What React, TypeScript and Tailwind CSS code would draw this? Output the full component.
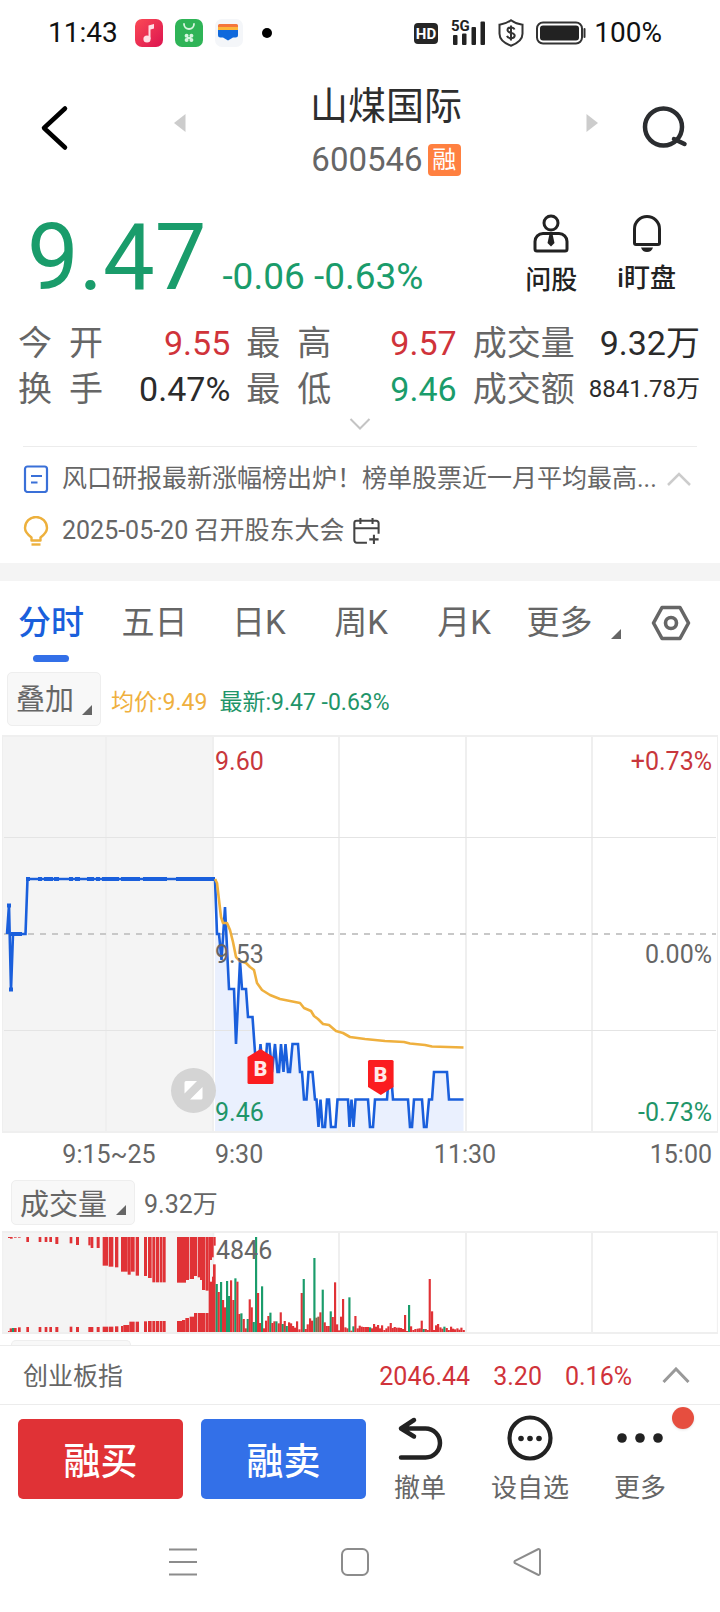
import React from "react";

const RED = "#e03236";
const GREEN = "#1a9c6b";
const BLUE = "#1a5fdc";

const preMarket =
  "7,934 9,905 11,990 13,934 25.5,934 27.5,879 215,879";
const session =
  "215,879 217,934 219,934 221.5,960 225,907 229,989 234,989 236,1044 240,961 242,989 246,989 248,1017 252.5,1017 255,1052 258,1072 260.5,1044 263,1072 265,1072 267,1044 269.5,1044 272,1072 275,1044 277.5,1072 279,1072 281,1044 283.5,1072 285.5,1044 288,1072 290,1072 292.5,1044 298,1044 300,1072 302,1072 304,1099.5 306.5,1099.5 308.5,1072 312.5,1072 315,1099.5 316.5,1099.5 318.5,1127 320.5,1099.5 322.5,1127 325,1127 327,1099.5 329,1099.5 331,1127 335.5,1127 337.5,1099.5 348,1099.5 349.5,1127 351.5,1099.5 353.5,1127 355.5,1099.5 368,1099.5 370,1127 373,1127 375,1099.5 387,1099.5 389,1072 391.5,1080 393,1099.5 408,1099.5 410,1127 412,1127 414,1099.5 422,1099.5 424,1127 426.5,1127 429,1099.5 432,1099.5 434,1072 447,1072 449,1099.5 463.5,1099.5";
const average =
  "215,879 217,883 219,900 221,917 223,923 227,923 230,930 233,942 236,957 240,961 246,963 250,967 254,970 257,983 262,990 270,995 280,999 290,1001 300,1003 304,1008 311,1011 314,1016 318,1019 323,1024 329,1025 336,1031 343,1033 350,1037 365,1039 385,1041 404,1042 410,1043.5 425,1045 432,1046.5 463.5,1047.5";

// Runs of auction quotes on the flat line: start x, end x
const quoteRuns: [number, number][] = [
  [26, 30], [38, 42], [44, 53], [54, 59], [69, 73], [75, 80], [87, 94], [96, 100],
  [102, 119], [121, 140], [143, 167], [176, 215],
];

// Auction bars hanging from the top: x, width, bottom
const matched: [number, number, number][] = [
  [24, 12, 54], [30, 8, 56], [42, 8, 53], [54, 8, 53], [79, 8, 66], [116, 8, 66], [134, 8, 66], [148, 8, 66],
  [166, 9, 72], [209, 8, 70], [228, 9, 75], [265, 7, 76], [272, 8, 84], [290, 9, 84], [308, 16, 137],
  [326, 14, 140], [345, 10, 142], [363, 20, 155], [383, 9, 164], [392, 12, 155], [407, 10, 167],
  [432, 9, 168], [444, 11, 174], [457, 9, 187], [468, 9, 187], [479, 8, 187], [488, 9, 187],
  [531, 27, 188], [558, 9, 180], [569, 13, 177], [582, 9, 168], [593, 7, 172], [600, 6, 180],
  [606, 10, 210], [617, 9, 212], [626, 4, 336], [630, 6, 120], [636, 5, 112], [641, 6, 77],
];
// Auction bars standing on the base line: x, width, top
const unmatched: [number, number, number][] = [
  [24, 5, 333], [29, 7, 325], [42, 8, 324], [54, 8, 322], [79, 8, 321], [116, 8, 321], [134, 8, 321],
  [148, 8, 321], [166, 9, 321], [209, 8, 320], [228, 9, 321], [265, 15, 321], [290, 9, 321], [308, 16, 320],
  [326, 14, 320], [345, 10, 319], [363, 7, 318], [370, 18, 315], [388, 16, 305], [407, 10, 305],
  [432, 9, 304], [444, 11, 303], [457, 9, 303], [468, 9, 303], [479, 8, 303], [488, 9, 303],
  [531, 15, 303], [546, 10, 300], [556, 11, 294], [569, 13, 290], [582, 9, 279], [593, 23, 279],
  [617, 9, 279], [630, 6, 185], [636, 3, 170], [639, 8, 133],
];
// Minute volumes: x, top, colour key
const minutes: [number, number, string][] = [
  [647, 192, "g"], [653, 216, "r"], [660, 186, "g"], [666, 240, "r"], [672, 262, "r"], [678, 183, "g"], [684, 228, "g"],
  [690, 181, "r"], [697, 240, "r"], [703, 175, "g"], [709, 185, "r"], [715, 282, "r"], [721, 280, "g"], [728, 297, "r"],
  [734, 325, "r"], [740, 297, "g"], [746, 238, "r"], [752, 262, "r"], [758, 306, "g"], [765, 51, "g"], [771, 219, "r"],
  [777, 309, "r"], [783, 199, "g"], [789, 325, "r"], [795, 302, "r"], [802, 288, "r"], [808, 278, "g"], [814, 309, "r"],
  [820, 304, "r"], [826, 304, "g"], [833, 310, "r"], [839, 277, "r"], [845, 312, "g"], [851, 303, "r"], [857, 318, "g"],
  [864, 307, "r"], [870, 310, "r"], [876, 318, "r"], [882, 323, "r"], [888, 304, "r"], [895, 328, "r"], [902, 219, "r"],
  [908, 177, "g"], [914, 327, "r"], [920, 313, "r"], [927, 295, "r"], [933, 302, "r"], [940, 114, "g"], [946, 293, "b"],
  [952, 290, "b"], [958, 277, "r"], [965, 209, "g"], [971, 307, "r"], [977, 318, "r"], [983, 318, "r"], [989, 274, "g"],
  [995, 291, "r"], [1002, 187, "r"], [1008, 313, "r"], [1014, 331, "r"], [1020, 290, "r"], [1026, 237, "r"],
  [1033, 322, "r"], [1039, 325, "r"], [1045, 232, "g"], [1051, 332, "r"], [1057, 319, "g"], [1063, 288, "r"],
  [1070, 325, "r"], [1076, 317, "r"], [1082, 320, "r"], [1088, 321, "r"], [1095, 321, "r"], [1101, 321, "r"],
  [1107, 322, "g"], [1113, 325, "r"], [1119, 312, "r"], [1125, 320, "r"], [1131, 315, "r"], [1137, 325, "r"],
  [1143, 316, "r"], [1150, 330, "r"], [1156, 325, "r"], [1162, 319, "r"], [1169, 309, "r"], [1175, 324, "r"],
  [1181, 321, "r"], [1187, 323, "r"], [1194, 323, "r"], [1200, 324, "r"], [1206, 327, "r"], [1212, 285, "r"],
  [1218, 333, "r"], [1224, 255, "g"], [1230, 319, "r"], [1237, 330, "r"], [1243, 327, "r"], [1250, 326, "r"],
  [1256, 325, "r"], [1262, 302, "r"], [1268, 327, "g"], [1274, 327, "r"], [1280, 330, "r"], [1286, 177, "r"],
  [1293, 274, "r"], [1299, 330, "r"], [1305, 316, "r"], [1311, 312, "r"], [1318, 322, "r"], [1324, 326, "r"],
  [1330, 320, "g"], [1337, 324, "r"], [1343, 330, "r"], [1350, 320, "r"], [1356, 326, "r"], [1362, 328, "r"],
  [1369, 325, "r"], [1375, 329, "r"], [1381, 323, "r"], [1388, 330, "r"],
];
const barColor: Record<string, string> = { r: RED, g: GREEN, b: "#8a6548" };

function StatusBar() {
  return (
    <div className="flex h-[66px] items-center pr-[58px] pl-[48px] text-[#111]">
      <span className="text-[28px] leading-8">11:43</span>
      <svg className="ml-[17px] h-7 w-7" viewBox="0 0 28 28">
        <defs>
          <linearGradient id="music" x1="0" y1="0" x2="1" y2="1">
            <stop offset="0" stopColor="#fb4a55" />
            <stop offset="1" stopColor="#dc1450" />
          </linearGradient>
        </defs>
        <rect width="28" height="28" rx="7" fill="url(#music)" />
        <path d="M13.500 6.500 19 5v4.500l-3.500 1V20h-2z" fill="#ffdfe5" />
        <circle cx="12" cy="20" r="3.600" fill="#ffdfe5" />
      </svg>
      <svg className="ml-[12px] h-7 w-7" viewBox="0 0 28 28">
        <rect width="28" height="28" rx="7" fill="#2fb457" />
        <path d="M9 5a5 5 0 0 0 10 0" stroke="#d6f5df" strokeWidth="1.800" fill="none" strokeLinecap="round" />
        <g fill="#d6f5df">
          <circle cx="11.600" cy="16.800" r="2" /><circle cx="16.400" cy="16.800" r="2" />
          <circle cx="11.600" cy="21" r="2" /><circle cx="16.400" cy="21" r="2" />
          <path d="M12 18h4v2h-4z" />
        </g>
      </svg>
      <svg className="ml-[12px] h-7 w-7" viewBox="0 0 28 28">
        <rect width="28" height="28" rx="7" fill="#f4f6f9" />
        <path d="M3 6.500A1.500 1.500 0 0 1 4.500 5h17A1.500 1.500 0 0 1 23 6.500v2H3z" fill="#f4763c" />
        <path d="M3 8h20v3H3z" fill="#fcb63a" />
        <path d="M3 11h20v5a2.500 2.500 0 0 1-2.500 2.500H18L13 21.500l-5-3H5.500A2.500 2.500 0 0 1 3 16z" fill="#1069dc" />
      </svg>
      <span className="ml-[19px] h-[10px] w-[10px] rounded-full bg-black" />
      <svg className="ml-auto h-[22px] w-[25px]" viewBox="0 0 25 22">
        <rect width="24" height="21" y="1" rx="4" fill="#262626" />
        <text x="12" y="17" textAnchor="middle" fill="#fff" className="text-[15px] font-bold">HD</text>
      </svg>
      <svg className="ml-[11px] h-9 w-[36px]" viewBox="0 -4 36 36">
        <text x="1" y="12" fill="#222" className="text-[15px] font-bold">5G</text>
        <g fill="#222">
          <rect x="3" y="16" width="4.500" height="10" rx="1" />
          <rect x="12" y="14.500" width="4.500" height="11.500" rx="1" />
          <rect x="21.500" y="8" width="4.500" height="18" rx="1" />
          <rect x="30.500" y="2.500" width="4.500" height="23.500" rx="1" />
        </g>
      </svg>
      <svg className="ml-[12px] h-[28px] w-[26px]" viewBox="0 0 26 28" fill="none" stroke="#333">
        <path d="M13 1.200c3.500 2.600 7 4 11.500 4.500v9c0 6-5 9.500-11.500 12-6.500-2.500-11.500-6-11.500-12v-9C6 5.200 9.500 3.800 13 1.200z" strokeWidth="2" />
        <path d="M16.500 10.500c-.6-1.500-2-2-3.500-2-2 0-3.500 1-3.500 2.600 0 3.800 7.200 1.800 7.200 5.500 0 1.700-1.500 2.700-3.700 2.700-2 0-3.500-.8-4-2.400M13 6.500v15" strokeWidth="2" />
      </svg>
      <svg className="ml-[12px] h-6 w-[50px]" viewBox="0 0 50 24">
        <rect x="1" y="1.500" width="45" height="21" rx="6" fill="none" stroke="#333" strokeWidth="2" />
        <rect x="4" y="4.500" width="39" height="15" rx="3" fill="#222" />
        <path d="M48.500 8v8" stroke="#333" strokeWidth="2" strokeLinecap="round" />
      </svg>
      <span className="ml-[8px] text-[28px] leading-8">100%</span>
    </div>
  );
}

function Header() {
  return (
    <header className="flex h-[124px] items-center justify-between px-[32px]">
      <button aria-label="返回" className="flex w-[46px] justify-center">
        <svg className="h-[46px] w-[30px]" viewBox="0 0 30 46">
          <path d="M25 3.500 4 23l21 19.500" fill="none" stroke="#000" strokeWidth="4.500" strokeLinecap="round" strokeLinejoin="round" />
        </svg>
      </button>
      <button aria-label="上一只" className="mb-[10px] ml-[96px]">
        <svg className="h-[18px] w-[12px]" viewBox="0 0 12 18"><path d="M11.500 0v18L0 9z" fill="#ccc" /></svg>
      </button>
      <div className="flex flex-1 flex-col items-center pt-[10px]">
        <h1 className="text-[38px] leading-[54px] text-[#2e2e2e]">山煤国际</h1>
        <p className="flex items-center gap-[5px] text-[33px] leading-[54px] text-[#666]">
          600546
          <span className="flex h-8 w-[33px] items-center justify-center rounded-[4px] bg-[#ff8040] text-[24px] text-white">融</span>
        </p>
      </div>
      <button aria-label="下一只" className="mr-[40px] mb-[10px]">
        <svg className="h-[18px] w-[12px]" viewBox="0 0 12 18"><path d="M.5 0v18L12 9z" fill="#ccc" /></svg>
      </button>
      <button aria-label="搜索">
        <svg className="h-[46px] w-[50px]" viewBox="0 0 50 46" fill="none" stroke="#2b2d30" strokeWidth="4.500">
          <circle cx="25.500" cy="22" r="18.500" />
          <path d="M36 34l10.500 5" strokeLinecap="round" />
        </svg>
      </button>
    </header>
  );
}

function PriceLine() {
  return (
    <section className="flex h-[130px] justify-between pr-[44px] pl-[27px]">
      <div className="flex items-baseline text-[#1a9c6b]">
        <span className="text-[92px] leading-[136px]">9.47</span>
        <span className="ml-[16px] text-[37px]">-0.06 -0.63%</span>
      </div>
      <div className="flex items-start gap-[40px] pt-[24px] text-[26px] leading-[38px] font-medium text-[#222]">
        <button className="flex flex-col items-center gap-[8px]">
          <svg className="h-[39px] w-[36px]" viewBox="0 0 36 39" fill="none" stroke="#222" strokeWidth="3">
            <circle cx="18" cy="9" r="7" />
            <path d="M10 19.500h16a8 8 0 0 1 8 8V35a2 2 0 0 1-2 2H4a2 2 0 0 1-2-2v-7.500a8 8 0 0 1 8-8z" />
            <path d="M16.500 20h3l2 9-3.500 3.500-3.500-3.500z" fill="#222" stroke="none" />
          </svg>
          问股
        </button>
        <button className="flex flex-col items-center gap-[6px]">
          <svg className="h-[39px] w-[30px]" viewBox="0 0 30 39">
            <path d="M2.500 29V15a12.500 12.500 0 0 1 25 0v14a1.500 1.500 0 0 1-1.500 1.500H4A1.500 1.500 0 0 1 2.500 29z" fill="none" stroke="#222" strokeWidth="3" />
            <path d="M9 33.500h12c-1 3-3 4.500-6 4.500s-5-1.500-6-4.500z" fill="#222" />
          </svg>
          i盯盘
        </button>
      </div>
    </section>
  );
}

function Quote({ label, value, tone, small }: { label: string; value: string; tone: string; small?: boolean }) {
  return (
    <div className="flex items-center justify-between">
      <dt className={label.length === 2 ? "flex gap-[17px] text-[#666]" : "text-[#666]"}>
        {label.length === 2 ? label.split("").map((c) => <span key={c}>{c}</span>) : label}
      </dt>
      <dd className={small ? "text-[24px] whitespace-nowrap " + tone : "text-[34px] whitespace-nowrap " + tone}>{value}</dd>
    </div>
  );
}

function Quotes() {
  return (
    <section>
      <dl className="grid grid-cols-[212fr_210fr_227fr] gap-x-[16px] pr-[20px] pl-[18px] text-[34px] leading-[46px]">
        <Quote label="今开" value="9.55" tone="text-[#d0333a]" />
        <Quote label="最高" value="9.57" tone="text-[#d0333a]" />
        <Quote label="成交量" value="9.32万" tone="text-[#2b2b2b]" />
        <Quote label="换手" value="0.47%" tone="text-[#2b2b2b]" />
        <Quote label="最低" value="9.46" tone="text-[#1a9c6b]" />
        <Quote label="成交额" value="8841.78万" tone="text-[#2b2b2b]" small />
      </dl>
      <button aria-label="展开行情" className="flex h-[34px] w-full justify-center pt-[6px]">
        <svg className="h-3 w-[22px]" viewBox="0 0 22 12"><path d="M1.500 1 11 10.500 20.500 1" fill="none" stroke="#c4c4c4" strokeWidth="2" /></svg>
      </button>
    </section>
  );
}

function News() {
  return (
    <section className="mx-[23px] border-t border-[#ececec] pt-[6px] pb-[6px] text-[25px] text-[#666]">
      <div className="flex h-[52px] items-center">
        <svg className="h-7 w-[26px] shrink-0" viewBox="0 0 26 28" fill="none" stroke="#3a70d8" strokeWidth="2.200">
          <rect x="2" y="1.500" width="22" height="25.500" rx="2.500" />
          <path d="M8 11h11M8 17.500h6.500" />
        </svg>
        <a href="#news" className="ml-[13px] flex-1 leading-[38px] whitespace-nowrap">风口研报最新涨幅榜出炉！榜单股票近一月平均最高...</a>
        <button aria-label="收起资讯" className="mr-[6px] shrink-0">
          <svg className="h-[14px] w-[24px]" viewBox="0 0 24 14"><path d="M1 13 12 2l11 11" fill="none" stroke="#ccc" strokeWidth="2.500" /></svg>
        </button>
      </div>
      <div className="flex h-[52px] items-center">
        <svg className="h-[30px] w-[26px]" viewBox="0 0 26 30" fill="none" stroke="#edb03c" strokeWidth="2.400">
          <path d="M8.500 24.500v-3C4.500 18.500 2 16 2 12a11 11 0 0 1 22 0c0 4-2.500 6.500-6.500 9.500v3z" strokeLinejoin="round" />
          <path d="M8.500 28.500h9" />
        </svg>
        <span className="ml-[13px]">2025-05-20 召开股东大会</span>
        <button aria-label="加入日历" className="ml-[8px]">
          <svg className="h-[28px] w-[28px]" viewBox="0 0 30 30" fill="none" stroke="#444" strokeWidth="2.200">
            <path d="M16 27.500H5a2.500 2.500 0 0 1-2.500-2.500V6.500A2.500 2.500 0 0 1 5 4h21a2.500 2.500 0 0 1 2.500 2.500V18M2.500 12h26M9 1v6.500M22 1v6.500M23.500 19v10M18.500 24h10" />
          </svg>
        </button>
      </div>
    </section>
  );
}

function Corner() {
  return (
    <svg className="h-[10px] w-[10px] shrink-0" viewBox="0 0 10 10"><path d="M10 0v10H0z" fill="#666" /></svg>
  );
}

function Tabs() {
  return (
    <nav className="flex h-[84px] items-center justify-between pr-[29px] pl-[18px] text-[33px] text-[#666]">
      <button className="relative flex h-full items-center font-medium text-[#1a5fdc]">
        分时
        <span className="absolute bottom-[3px] left-1/2 h-[7px] w-9 -translate-x-1/2 rounded-full bg-[#3370e8]" />
      </button>
      <button className="ml-[7px]">五日</button>
      <button className="ml-[14px]">日K</button>
      <button className="ml-[18px]">周K</button>
      <button className="ml-[19px]">月K</button>
      <button className="ml-[5px] flex items-center gap-[18px]">
        更多
        <span className="pt-[22px]"><Corner /></span>
      </button>
      <button aria-label="图表设置">
        <svg className="h-9 w-[40px]" viewBox="0 0 40 36" fill="none" stroke="#666" strokeWidth="3.600">
          <path d="M11 2.500h18L37.500 18 29 33.500H11L2.500 18z" strokeLinejoin="round" />
          <circle cx="20" cy="18" r="5.500" />
        </svg>
      </button>
    </nav>
  );
}

function PriceChart() {
  return (
    <svg className="mt-[6px] block w-full" viewBox="0 732 720 440" role="img" aria-label="分时走势">
      <rect x="3" y="736" width="211" height="396" fill="#f4f4f4" />
      <polygon points={session + " 463.5,1132 215,1132"} fill="#eaf0fe" />
      <g stroke="#efefef" strokeWidth="2" fill="none">
        <path d="M2 736h716M2 1132h716" />
        <path d="M2.500 736v396M717.500 736v396" strokeWidth="1" />
        <path d="M106 736v396M213 736v396M339 736v396M466 736v396M592 736v396" />
        <path d="M4 837.500h712M4 1030.500h712" stroke="#e4e4e4" strokeWidth="1" />
      </g>
      <path d="M4 934h712" stroke="#c8c8c8" strokeWidth="2" strokeDasharray="6 6" />
      <g fill="none" stroke={BLUE} strokeWidth="2.600" strokeLinejoin="miter" strokeMiterlimit="2">
        <polyline points={preMarket} />
        <polyline points={session} />
      </g>
      <g fill={BLUE}>
        <rect x="7" y="903.500" width="4" height="4" />
        <rect x="9" y="987.500" width="4" height="4" />
        <rect x="11" y="932" width="11" height="4" />
        {quoteRuns.map(([a, b]) => (
          <rect key={a} x={a} y="877" width={b - a} height="4" />
        ))}
      </g>
      <polyline points={average} fill="none" stroke="#efb03e" strokeWidth="2.600" strokeLinejoin="round" />
      <circle cx="193.500" cy="1090.500" r="22.500" fill="#d4d4d4" />
      <path d="M184.500 1082.500a1.500 1.500 0 0 1 1.500-1.500h11l-12.500 12.500zM202.500 1098a1.500 1.500 0 0 1-1.500 1.500h-11l12.500-12.500z" fill="#fff" />
      <g fill="#fb1c1f">
        <path d="M247.500 1057l13-8 13 8v25.500a1.500 1.500 0 0 1-1.500 1.500h-23a1.500 1.500 0 0 1-1.500-1.500z" />
        <path d="M368 1087l12.800 8 12.800-8v-25.500a1.500 1.500 0 0 0-1.500-1.500h-22.600a1.500 1.500 0 0 0-1.500 1.500z" />
      </g>
      <g fill="#ffe9e9" textAnchor="middle" className="text-[21px] font-black">
        <text x="260.500" y="1076">B</text>
        <text x="380.500" y="1082">B</text>
      </g>
      <g className="text-[25px]">
        <text x="215" y="770" fill="#c8373c">9.60</text>
        <text x="215" y="963" fill="#666">9.53</text>
        <text x="215" y="1121" fill="#1f9569">9.46</text>
        <g textAnchor="end">
          <text x="712" y="770" fill="#c8373c">+0.73%</text>
          <text x="712" y="963" fill="#666">0.00%</text>
          <text x="712" y="1121" fill="#1f9569">-0.73%</text>
        </g>
        <g fill="#666">
          <text x="109" y="1163" textAnchor="middle">9:15~25</text>
          <text x="215" y="1163">9:30</text>
          <text x="465" y="1163" textAnchor="middle">11:30</text>
          <text x="712" y="1163" textAnchor="end">15:00</text>
        </g>
      </g>
    </svg>
  );
}

function VolumeChart() {
  return (
    <svg className="mt-[6px] block w-full" viewBox="0 33 2160 312" role="img" aria-label="成交量走势">
      <rect x="8" y="36" width="634" height="302" fill="#f4f4f4" />
      <g stroke="#efefef" strokeWidth="6">
        <path d="M6 36h2148M6 339h2148" />
        <path d="M318 36v303M640 36v303M1017 36v303M1398 36v303M1776 36v303" />
        <path d="M8 36v303M2152 36v303" strokeWidth="3" />
      </g>
      <g fill={RED}>
        {matched.map(([x, w, b]) => <rect key={x} x={x} y="51" width={w} height={b - 51} />)}
        {unmatched.map(([x, w, t]) => <rect key={x} x={x} y={t} width={w} height={336 - t} />)}
      </g>
      <rect x="36" y="324" width="6" height="12" fill={GREEN} />
      {minutes.map(([x, t, c]) => <rect key={x} x={x} y={t} width="6.500" height={336 - t} fill={barColor[c]} />)}
      <text x="648" y="116" fill="#666" className="text-[75px]">4846</text>
    </svg>
  );
}

export default function App() {
  return (
    <div lang="zh-CN" className="min-h-screen w-full overflow-hidden bg-white font-['Roboto','Noto_Sans_CJK_SC',sans-serif]">
      <StatusBar />
      <Header />
      <PriceLine />
      <Quotes />
      <News />
      <div className="h-[18px] bg-[#f4f4f4]" />
      <Tabs />
      <div className="flex items-center pt-[7px] pl-[7px]">
        <button className="flex h-[54px] w-[94px] items-center justify-between rounded-[5px] border border-[#eee] bg-[#f8f8f8] pt-1 pr-[8px] pl-[8px] text-[29px] text-[#666]">
          叠加
          <span className="pt-[18px]"><Corner /></span>
        </button>
        <p className="flex gap-[12px] pt-2 pl-[10px] text-[23px] leading-8">
          <span className="text-[#efb03e]">均价:9.49</span>
          <span className="text-[#1f9569]">最新:9.47 -0.63%</span>
        </p>
      </div>
      <PriceChart />
      <div className="flex items-center pt-2 pl-[11px] text-[#666]">
        <button className="flex h-[45px] w-[124px] items-center justify-between rounded-[5px] border border-[#eee] bg-[#f8f8f8] pt-1 pr-[8px] pl-[8px] text-[29px] leading-[38px]">
          成交量
          <span className="pt-[10px]"><Corner /></span>
        </button>
        <p className="pt-1 pl-[9px] text-[25px] leading-8">9.32万</p>
      </div>
      <VolumeChart />
      <div className="mt-[5px] ml-[11px] h-[5px] w-[120px] rounded-t-[5px] border border-b-0 border-[#eee] bg-[#f8f8f8]" />
      <section className="flex h-[60px] items-center border-y border-[#ececec] pt-1 pr-[30px] pl-[23px] text-[25px] text-[#d0333a]">
        <span className="flex-1 text-[#666]">创业板指</span>
        <span>2046.44</span>
        <span className="ml-[23px]">3.20</span>
        <span className="ml-[23px]">0.16%</span>
        <button aria-label="展开指数" className="mb-1 ml-[30px]">
          <svg className="h-4 w-[28px]" viewBox="0 0 28 16"><path d="M1.500 15 14 2l12.500 13" fill="none" stroke="#999" strokeWidth="3" /></svg>
        </button>
      </section>
      <footer className="flex pt-[14px] pr-[18px] pl-[18px] text-[26px] leading-[38px] text-[#666]">
        <button className="h-20 w-[165px] rounded-[5px] bg-[#e03236] pt-[7px] text-[37px] font-medium text-white">融买</button>
        <button className="ml-[18px] h-20 w-[165px] rounded-[5px] bg-[#3370e8] pt-[7px] text-[37px] font-medium text-white">融卖</button>
        <div className="-mt-[6px] flex flex-1 justify-between pr-[36px] pl-[28px]">
          <button className="flex flex-col items-center gap-[6px]">
            <svg className="h-[50px] w-[46px]" viewBox="0 0 46 50" fill="none" stroke="#222" strokeWidth="4.500" strokeLinecap="round" strokeLinejoin="round">
              <path d="M17 7 4 15.500l13 8M4 15.500h24.500a14.500 14.500 0 0 1 0 29H4" />
            </svg>
            撤单
          </button>
          <button className="flex flex-col items-center gap-[6px]">
            <svg className="h-[50px] w-[50px]" viewBox="0 0 50 50">
              <circle cx="25" cy="25" r="20.500" fill="none" stroke="#222" strokeWidth="4.200" />
              <g fill="#222"><circle cx="16" cy="25.500" r="2.800" /><circle cx="25" cy="25.500" r="2.800" /><circle cx="34" cy="25.500" r="2.800" /></g>
            </svg>
            设自选
          </button>
          <button className="relative flex flex-col items-center gap-[6px]">
            <svg className="h-[50px] w-[50px]" viewBox="0 0 50 50" fill="#222">
              <circle cx="7" cy="25" r="4.800" /><circle cx="25" cy="25" r="4.800" /><circle cx="43" cy="25" r="4.800" />
            </svg>
            更多
            <span className="absolute -top-[6px] -right-[28px] h-[22px] w-[22px] rounded-full bg-[#e64e3f] shadow-sm" />
          </button>
        </div>
      </footer>
      <nav className="flex justify-between px-[169px] pt-[41px] pb-[33px]">
        <button aria-label="最近任务">
          <svg className="h-7 w-7" viewBox="0 0 28 28" stroke="#8c8c8c" strokeWidth="2"><path d="M0 1.500h28M0 14h28M0 26.500h28" /></svg>
        </button>
        <button aria-label="主屏幕">
          <svg className="h-7 w-7" viewBox="0 0 28 28" fill="none" stroke="#8c8c8c" strokeWidth="2"><rect x="1" y="1" width="26" height="26" rx="5.500" /></svg>
        </button>
        <button aria-label="后退">
          <svg className="mr-[10px] h-7 w-7" viewBox="0 0 28 28" fill="none" stroke="#8c8c8c" strokeWidth="2" strokeLinejoin="round"><path d="M24.500 1.500a1.500 1.500 0 0 1 2.500 1v23a1.500 1.500 0 0 1-2.500 1L2 15.200a1.500 1.500 0 0 1 0-2.400z" /></svg>
        </button>
      </nav>
    </div>
  );
}
